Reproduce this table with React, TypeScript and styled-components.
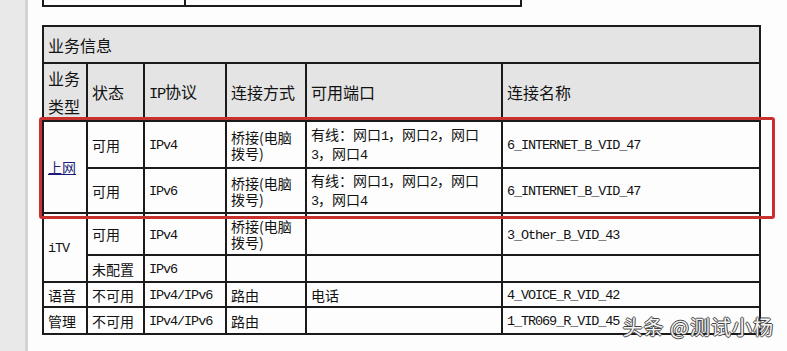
import React from "react";
import styled, { createGlobalStyle } from "styled-components";

const GlobalStyle = createGlobalStyle`
  html, body {
    margin: 0;
    padding: 0;
    background: #fdfdfd;
  }
  body {
    font-family: "Noto Sans CJK SC", "Liberation Sans", sans-serif;
    color: #121212;
  }
`;

const Page = styled.div`
  position: relative;
  display: flex;
  width: 787px;
  height: 351px;
  overflow: hidden;
  background: #fdfdfd;
`;

const Gutter = styled.div`
  width: 25px;
  flex-shrink: 0;
  background: #e9e9e9;
  border-right: 3px solid #d3d3d3;
`;

const Content = styled.div`
  flex: 1;
  display: flex;
  flex-direction: column;
  align-items: flex-start;
  padding-left: 14px;
`;

const TopStub = styled.div`
  display: flex;
  width: 476px;
  height: 5px;
  border: 2px solid #1b1b1b;
  border-top: none;
`;

const StubCell = styled.div<{ $w?: number }>`
  ${(p) => (p.$w ? `width: ${p.$w}px;` : "flex: 1;")}
  & + & {
    border-left: 2px solid #1b1b1b;
  }
`;

const TableWrap = styled.div`
  position: relative;
  margin-top: 18px;
`;

const Table = styled.table`
  border-collapse: collapse;
  table-layout: fixed;
  width: 719px;
`;

const Row = styled.tr<{ $h: number }>`
  height: ${(p) => p.$h}px;
`;

const Head = styled.th`
  border: 2px solid #1b1b1b;
  background: #e4e4e4;
  padding: 0 4px;
  font-size: 16px;
  line-height: 28px;
  font-weight: normal;
  text-align: left;
  vertical-align: middle;
`;

const Cell = styled.td`
  border: 2px solid #1b1b1b;
  background: #fdfdfd;
  padding: 0 4px;
  font-size: 14px;
  line-height: 16px;
  text-align: left;
  vertical-align: middle;
`;

// half-width latin, like SimSun's: 0.5em advance
const Latin = styled.span`
  font-family: "Liberation Mono", monospace;
  font-size: 0.965em;
  letter-spacing: -0.08em;
`;

const LinkText = styled.a`
  color: #1c1c78;
  text-decoration: underline;
  font-size: 14px;
`;

const Highlight = styled.div`
  position: absolute;
  left: -3px;
  top: 92px;
  width: 730px;
  height: 96px;
  border: 3px solid #c8312e;
  border-radius: 3px;
  pointer-events: none;
`;

const Watermark = styled.div`
  position: absolute;
  right: 13px;
  bottom: 10px;
  font-size: 20px;
  letter-spacing: 1px;
  color: #f4f4f4;
  text-shadow: 1px 0 0 #444, -1px 0 0 #444, 0 1px 0 #444, 0 -1px 0 #444;
`;

const mixed = (text: string) =>
  text.split(/([A-Za-z0-9_\/]+)/).map((part, i) =>
    i % 2 === 1 ? (
      <Latin key={i}>{part}</Latin>
    ) : (
      <React.Fragment key={i}>{part}</React.Fragment>
    )
  );

const cols = [44, 57, 82, 80, 196, 258];

const App = () => {
  return (
    <>
      <GlobalStyle />
      <Page>
        <Gutter />
        <Content>
          <TopStub>
            <StubCell $w={140} />
            <StubCell />
          </TopStub>
          <TableWrap>
            <Table>
              <colgroup>
                {cols.map((w, i) => (
                  <col key={i} style={{ width: w }} />
                ))}
              </colgroup>
              <tbody>
                <Row $h={37}>
                  <Head colSpan={6}>业务信息</Head>
                </Row>
                <Row $h={58}>
                  <Head>业务类型</Head>
                  <Head>状态</Head>
                  <Head>{mixed("IP协议")}</Head>
                  <Head>连接方式</Head>
                  <Head>可用端口</Head>
                  <Head>连接名称</Head>
                </Row>
                <Row $h={47}>
                  <Cell rowSpan={2}>
                    <LinkText>上网</LinkText>
                  </Cell>
                  <Cell>可用</Cell>
                  <Cell>{mixed("IPv4")}</Cell>
                  <Cell>桥接(电脑拨号)</Cell>
                  <Cell>{mixed("有线：网口1，网口2，网口3，网口4")}</Cell>
                  <Cell>{mixed("6_INTERNET_B_VID_47")}</Cell>
                </Row>
                <Row $h={45}>
                  <Cell>可用</Cell>
                  <Cell>{mixed("IPv6")}</Cell>
                  <Cell>桥接(电脑拨号)</Cell>
                  <Cell>{mixed("有线：网口1，网口2，网口3，网口4")}</Cell>
                  <Cell>{mixed("6_INTERNET_B_VID_47")}</Cell>
                </Row>
                <Row $h={42}>
                  <Cell rowSpan={2}>{mixed("iTV")}</Cell>
                  <Cell>可用</Cell>
                  <Cell>{mixed("IPv4")}</Cell>
                  <Cell>桥接(电脑拨号)</Cell>
                  <Cell />
                  <Cell>{mixed("3_Other_B_VID_43")}</Cell>
                </Row>
                <Row $h={27}>
                  <Cell>未配置</Cell>
                  <Cell>{mixed("IPv6")}</Cell>
                  <Cell />
                  <Cell />
                  <Cell />
                </Row>
                <Row $h={25}>
                  <Cell>语音</Cell>
                  <Cell>不可用</Cell>
                  <Cell>{mixed("IPv4/IPv6")}</Cell>
                  <Cell>路由</Cell>
                  <Cell>电话</Cell>
                  <Cell>{mixed("4_VOICE_R_VID_42")}</Cell>
                </Row>
                <Row $h={27}>
                  <Cell>管理</Cell>
                  <Cell>不可用</Cell>
                  <Cell>{mixed("IPv4/IPv6")}</Cell>
                  <Cell>路由</Cell>
                  <Cell />
                  <Cell>{mixed("1_TR069_R_VID_45")}</Cell>
                </Row>
              </tbody>
            </Table>
            <Highlight />
          </TableWrap>
        </Content>
        <Watermark>头条 @测试小杨</Watermark>
      </Page>
    </>
  );
};

export default App;
